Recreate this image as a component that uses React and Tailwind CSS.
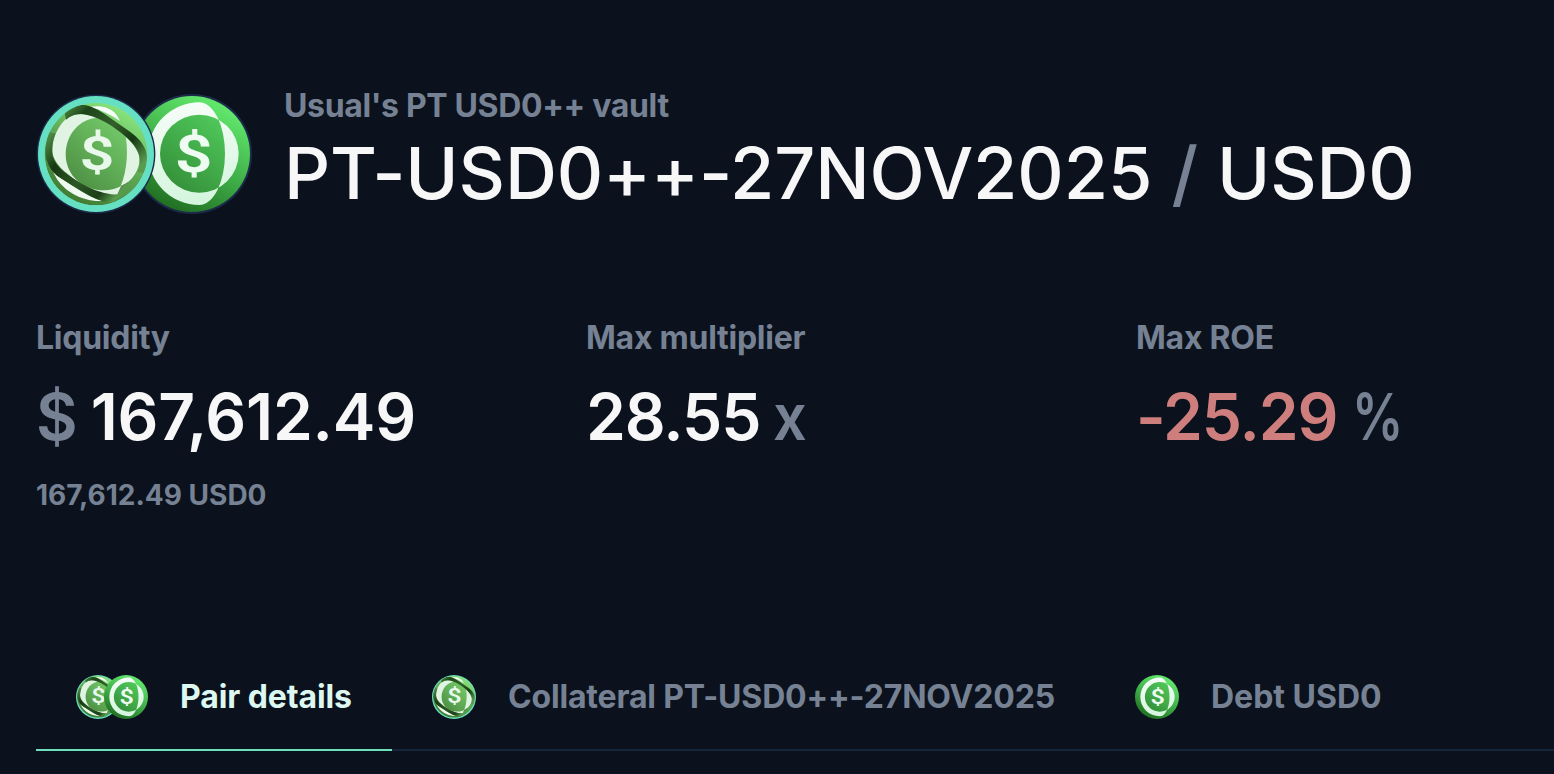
import clsx from 'clsx'

const stats = [
  { label: 'Liquidity', prefix: '$', value: '167,612.49', note: '167,612.49 USD0' },
  { label: 'Max multiplier', value: '28.55', suffix: 'x' },
  { label: 'Max ROE', value: '-25.29', suffix: '%', negative: true },
]

function UsdCoin({ className, id, small }) {
  return (
    <svg viewBox={small ? '2 2 116 116' : '0 0 120 120'} className={className} aria-hidden="true">
      <defs>
        <linearGradient id={`${id}-bg`} x1="0.75" y1="0.1" x2="0.3" y2="1">
          <stop offset="0" stopColor="#60e56b" />
          <stop offset="0.5" stopColor="#3fae48" />
          <stop offset="1" stopColor="#1f6b20" />
        </linearGradient>
        <linearGradient id={`${id}-in`} x1="0.8" y1="0.1" x2="0.2" y2="0.9">
          <stop offset="0" stopColor="#4fc75a" />
          <stop offset="1" stopColor="#36933b" />
        </linearGradient>
        <linearGradient id={`${id}-w`} x1="0.4" y1="0" x2="0.5" y2="1">
          <stop offset="0" stopColor="#f6fdf8" />
          <stop offset="1" stopColor="#d3f5dc" />
        </linearGradient>
      </defs>
      {!small && <circle cx="60" cy="60" r="60" fill="#1b2b49" />}
      <circle cx="60" cy="60" r="58" fill={`url(#${id}-bg)`} />
      <g transform="translate(-2 -9) scale(0.33333)">
        <circle cx="208" cy="206" r="117" fill={`url(#${id}-in)`} />
        <path
          fillRule="evenodd"
          fill={`url(#${id}-w)`}
          d="M208 52A154 154 0 0 0 208 360A77 154 0 0 0 208 52ZM208 89A118 117 0 0 1 208 323A118 117 0 0 1 208 89Z"
        />
        <text
          transform="translate(191 262) scale(1.26 1)"
          textAnchor="middle"
          fontFamily="Roboto, sans-serif"
          fontWeight="600"
          fontSize="158"
          fill="#effcf2"
        >
          $
        </text>
      </g>
    </svg>
  )
}

function PtCoin({ className, id, small }) {
  return (
    <svg viewBox={small ? '2 2 116 116' : '0 0 120 120'} className={className} aria-hidden="true">
      <defs>
        <linearGradient id={`${id}-bg`} x1="0.8" y1="0.1" x2="0.3" y2="1">
          <stop offset="0" stopColor="#86e27a" />
          <stop offset="0.5" stopColor="#5da653" />
          <stop offset="1" stopColor="#3f7a31" />
        </linearGradient>
        <linearGradient id={`${id}-in`} x1="0.8" y1="0.1" x2="0.2" y2="0.9">
          <stop offset="0" stopColor="#71c667" />
          <stop offset="1" stopColor="#4f9245" />
        </linearGradient>
        <linearGradient id={`${id}-top`} x1="0" y1="0" x2="1" y2="0.8">
          <stop offset="0" stopColor="#4f9344" />
          <stop offset="0.2" stopColor="#1e4319" />
          <stop offset="0.5" stopColor="#33602b" />
          <stop offset="0.75" stopColor="#173813" />
          <stop offset="1" stopColor="#5a9a4e" />
        </linearGradient>
        <linearGradient id={`${id}-bot`} x1="0" y1="0" x2="1" y2="0.7">
          <stop offset="0" stopColor="#5a9a4e" />
          <stop offset="0.3" stopColor="#173813" />
          <stop offset="0.6" stopColor="#2c5825" />
          <stop offset="0.85" stopColor="#1b3e17" />
          <stop offset="1" stopColor="#5a9a4e" />
        </linearGradient>
        <clipPath id={`${id}-clip`}>
          <circle cx="198" cy="207" r="154" />
        </clipPath>
      </defs>
      {!small && <circle cx="60" cy="60" r="59.4" fill="#1b2b49" />}
      <circle cx="60" cy="60" r="58" fill="#66e0c3" />
      <g transform={small ? 'translate(-11.3 -15.2) scale(0.36)' : 'translate(-6 -9) scale(0.33333)'}>
        <g clipPath={`url(#${id}-clip)`}>
          <circle cx="198" cy="207" r="154" fill={`url(#${id}-bg)`} />
          {/* slivers of the ring that stay outside the band */}
          <path d="M180 66C215 58 255 68 270 108C245 90 215 75 180 66Z" fill="#f7fdf8" />
          <path d="M70 262C95 320 160 352 218 348C170 335 115 295 70 262Z" fill="#effaf0" />
          {/* ring seen through the band */}
          <path
            d="M112 98C85 120 66 160 67 200C72 240 112 268 160 300C200 322 240 335 262 330L275 302C305 290 330 255 329 218C322 185 290 155 255 128C220 100 160 72 112 98Z"
            fill="#e1f4e4"
          />
          <path
            d="M207 98C238 98 262 122 286 148C294 190 294 250 272 304C250 316 226 318 200 314C145 305 107 262 107 207C107 148 150 99 207 98Z"
            fill={`url(#${id}-in)`}
          />
          {/* dark band edges */}
          <path
            d="M104 84C120 66 140 60 160 60C182 61 204 74 228 90L300 140C330 162 346 184 350 208C352 226 350 246 342 264L322 262C329 246 331 228 327 210C320 184 296 160 266 138C238 117 212 102 186 94C160 84 134 82 108 104Z"
            fill={`url(#${id}-top)`}
          />
          <path
            d="M58 142C46 172 42 206 52 230C60 252 74 268 92 280L160 322C190 340 214 350 236 352C262 350 288 330 296 290L274 302L262 328C230 330 196 318 158 298C118 274 78 250 68 214C64 190 68 168 76 146Z"
            fill={`url(#${id}-bot)`}
          />
        </g>
        <text
          transform="translate(201 254) scale(1.26 1)"
          textAnchor="middle"
          fontFamily="Roboto, sans-serif"
          fontWeight="600"
          fontSize="146"
          fill="#e8f8ea"
        >
          $
        </text>
      </g>
    </svg>
  )
}

function Stat({ label, prefix, value, suffix, note, negative }) {
  return (
    <div className="w-[550px] shrink-0">
      <p className="text-[32px] leading-[48px] font-[650] tracking-[-0.25px]">{label}</p>
      <p className="mt-[15px] flex text-[64px] leading-[80px] font-semibold whitespace-nowrap">
        {prefix && <span className="mr-[13px]">{prefix}</span>}
        <span
          className={clsx(
            negative ? 'text-[#ce7e7c]' : 'text-[#f7f7f7]',
            prefix ? 'tracking-[-0.2px]' : 'tracking-[-1.1px]'
          )}
        >
          {value}
        </span>
        {suffix && (
          <span className={clsx('origin-left', suffix === '%' ? 'ml-[15px] scale-x-[0.8]' : 'ml-[13px] scale-x-[0.93]')}>
            {suffix}
          </span>
        )}
      </p>
      {note && <p className="mt-[18px] text-[28px] leading-[40px] font-[650]">{note}</p>}
    </div>
  )
}

export default function App() {
  return (
    <div className="h-[774px] w-full overflow-hidden bg-[#0b121d] pl-9 font-['Inter',sans-serif] text-[#768294]">
      {/* Vault header */}
      <header className="flex items-center gap-8 pt-[82px]">
        <div className="mt-2 flex shrink-0">
          <PtCoin id="pt" className="relative z-10 size-[120px]" />
          <UsdCoin id="usd" className="-ml-6 size-[120px]" />
        </div>
        <div>
          <p className="text-[32px] leading-[48px] font-[650] tracking-[-0.34px]">Usual's PT USD0++ vault</p>
          <h1 className="-mt-px text-[72px] leading-[88px] font-[540] tracking-[-0.12px] whitespace-nowrap text-[#f7f7f7]">
            PT-USD0++-27NOV2025 <span className="text-[#768294]">/</span> USD0
          </h1>
        </div>
      </header>

      {/* Stats */}
      <section className="mt-[97px] flex h-[201px]">
        {stats.map((stat) => (
          <Stat key={stat.label} {...stat} />
        ))}
      </section>

      {/* Tabs */}
      <nav className="mt-[128px] flex h-[108px] border-b-2 border-[#15253d] text-[32px] leading-[48px] font-[650] whitespace-nowrap">
        <button className="-mb-[2px] flex w-[356px] shrink-0 items-center gap-8 border-b-2 border-[#70dfbb] pt-[2px] pl-10 text-[#ddf8f0]">
          <span className="flex shrink-0">
            <PtCoin small id="pair-pt" className="size-11" />
            <UsdCoin small id="pair-usd" className="relative -ml-4 size-11" />
          </span>
          <span className="tracking-[-0.1px]">Pair details</span>
        </button>
        <button className="flex shrink-0 items-center gap-8 px-10 pt-[2px]">
          <PtCoin small id="col-pt" className="size-11" />
          <span className="tracking-[-0.17px]">Collateral PT-USD0++-27NOV2025</span>
        </button>
        <button className="flex shrink-0 items-center gap-8 px-10 pt-[2px]">
          <UsdCoin small id="debt-usd" className="size-11" />
          Debt USD0
        </button>
      </nav>
    </div>
  )
}
